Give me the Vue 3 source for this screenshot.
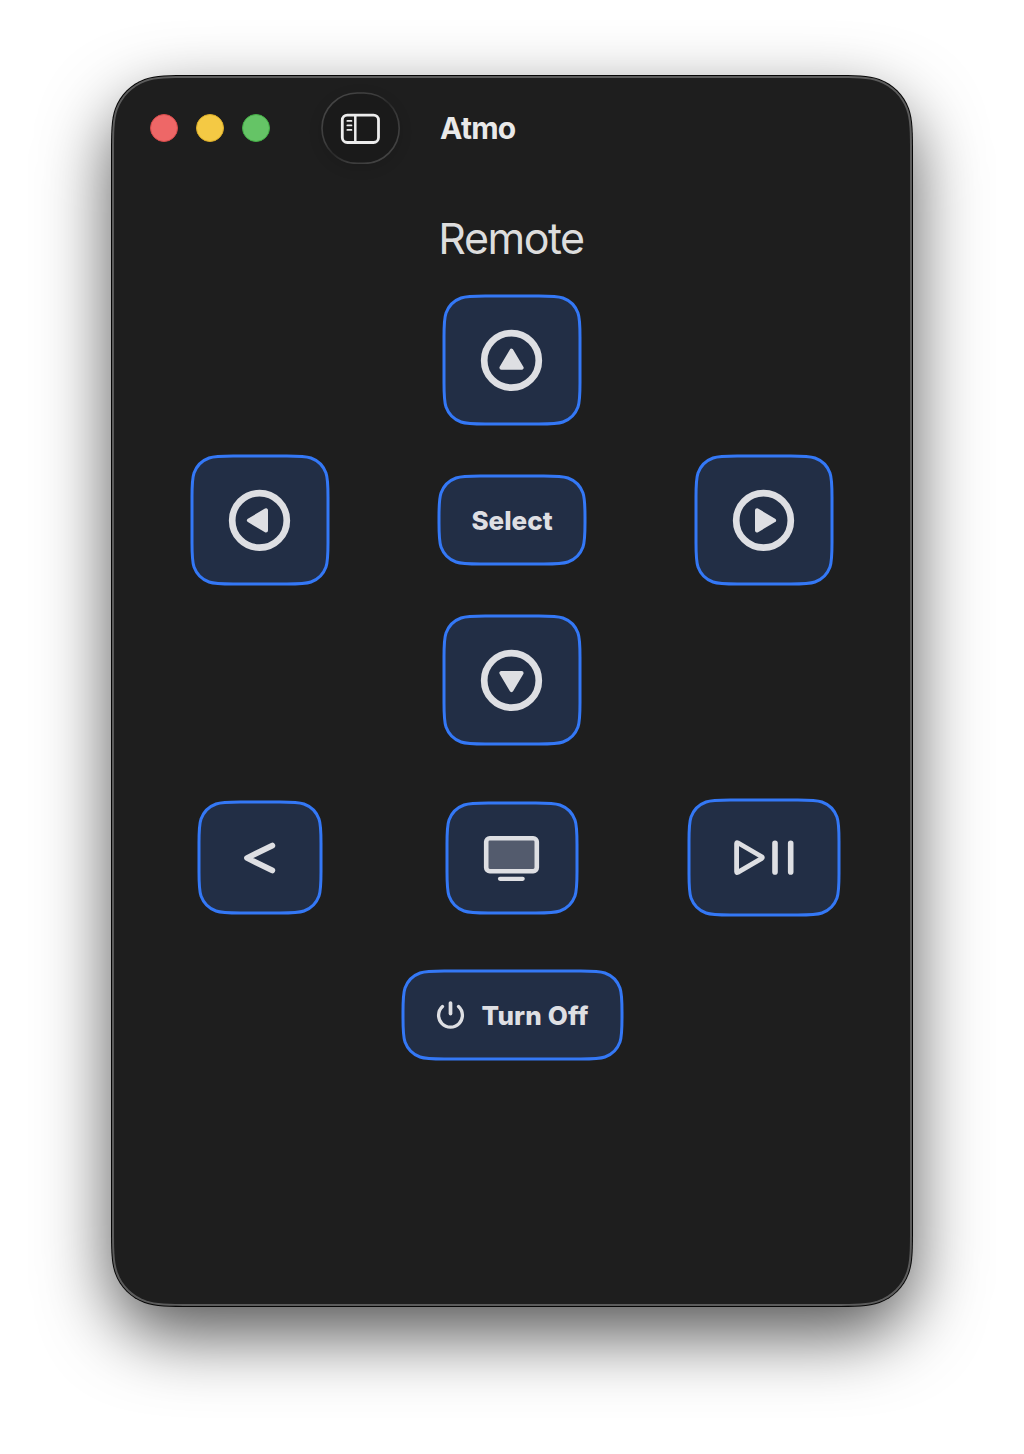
<script setup>
// Continuous-curvature rounded rectangle
function squircle(x, y, w, h, r) {
  const a = 1.528665 * r, b = 1.08849296 * r, c = 0.84 * r
  const d = 0.63149379 * r, e = 0.07491139 * r, f = 0.37282383 * r, g = 0.16905956 * r
  const R = x + w, B = y + h
  return `M${x + a} ${y}H${R - a}` +
    `C${R - b} ${y} ${R - c} ${y} ${R - d} ${y + e}` +
    `C${R - f} ${y + g} ${R - g} ${y + f} ${R - e} ${y + d}` +
    `C${R} ${y + c} ${R} ${y + b} ${R} ${y + a}V${B - a}` +
    `C${R} ${B - b} ${R} ${B - c} ${R - e} ${B - d}` +
    `C${R - g} ${B - f} ${R - f} ${B - g} ${R - d} ${B - e}` +
    `C${R - c} ${B} ${R - b} ${B} ${R - a} ${B}H${x + a}` +
    `C${x + b} ${B} ${x + c} ${B} ${x + d} ${B - e}` +
    `C${x + f} ${B - g} ${x + g} ${B - f} ${x + e} ${B - d}` +
    `C${x} ${B - c} ${x} ${B - b} ${x} ${B - a}V${y + a}` +
    `C${x} ${y + b} ${x} ${y + c} ${x + e} ${y + d}` +
    `C${x + g} ${y + f} ${x + f} ${y + g} ${x + d} ${y + e}` +
    `C${x + c} ${y} ${x + b} ${y} ${x + a} ${y}Z`
}

const rows = [
  { id: 'r1', keys: [{ id: 'up', w: 136, h: 128, turn: 0, nudge: 0 }] },
  {
    id: 'r2',
    keys: [
      { id: 'left', w: 136, h: 128, turn: -90, nudge: -0.9 },
      { id: 'select', w: 146, h: 88, label: 'Select' },
      { id: 'right', w: 136, h: 128, turn: 90, nudge: -0.9 },
    ],
  },
  { id: 'r3', keys: [{ id: 'down', w: 136, h: 128, turn: 180, nudge: 0 }] },
  {
    id: 'r4',
    keys: [
      { id: 'back', w: 122, h: 111 },
      { id: 'tv', w: 130, h: 110 },
      { id: 'play', w: 150, h: 115 },
    ],
  },
  { id: 'r5', keys: [{ id: 'power', w: 219, h: 88, label: 'Turn Off' }] },
]
</script>

<template>
  <div class="desktop">
    <main class="window">
      <svg class="frame" width="802" height="1232" viewBox="-1 -1 802 1232">
        <path :d="squircle(-1, -1, 802, 1232, 53)" fill="#050505" />
        <path :d="squircle(0, 0, 800, 1230, 52)" fill="#5c5c5c" />
        <path :d="squircle(2, 2, 796, 1226, 50)" fill="#1e1e1e" />
      </svg>

      <header class="titlebar">
        <div class="lights">
          <span class="light red"></span>
          <span class="light yellow"></span>
          <span class="light green"></span>
        </div>
        <button class="sidebar-toggle" aria-label="Toggle sidebar">
          <svg width="79" height="72" viewBox="0 0 79 72" fill="none">
            <defs>
              <linearGradient id="rim" x1="0" y1="0" x2="1" y2="1">
                <stop offset="0" stop-color="#484848" />
                <stop offset=".38" stop-color="#3c3c3c" />
                <stop offset=".5" stop-color="#292929" />
                <stop offset=".65" stop-color="#3a3a3a" />
                <stop offset="1" stop-color="#484848" />
              </linearGradient>
            </defs>
            <rect x="1" y="1" width="77.2" height="70.4" rx="35.2" fill="#1a1a1a" stroke="url(#rim)" stroke-width="1.6" />
            <g stroke="#ececec">
              <rect x="21.3" y="23.1" width="36.2" height="27.4" rx="5" stroke-width="2.8" />
              <path d="M34.3 23v27.5" stroke-width="2.5" />
              <path d="M26.4 28.9h4M26.4 33.4h4M26.4 37.9h4" stroke-width="1.9" stroke-linecap="round" />
            </g>
          </svg>
        </button>
        <span class="app-name">Atmo</span>
      </header>

      <h1 class="heading">Remote</h1>

      <section class="remote">
        <div v-for="row in rows" :key="row.id" class="row" :class="row.id">
          <div v-for="key in row.keys" :key="key.id" class="cell">
            <button class="key" :class="key.id" :aria-label="key.id" :style="{ width: key.w + 'px', height: key.h + 'px' }">
              <svg class="plate" :width="key.w + 4" :height="key.h + 4" :viewBox="`-2 -2 ${key.w + 4} ${key.h + 4}`">
                <path :d="squircle(0, 0, key.w, key.h, 27)" />
              </svg>

              <svg v-if="key.turn !== undefined" class="glyph" width="62" height="62" viewBox="-30.5 -31.4 62 62">
                <circle r="27.3" fill="none" stroke="#dedfe3" stroke-width="6.7" />
                <path :transform="`rotate(${key.turn}) translate(0 ${key.nudge})`" d="M0 -9.7L10.1 7.4H-10.1Z" fill="#dedfe3" stroke="#dedfe3" stroke-width="4" stroke-linejoin="round" />
              </svg>
              <svg v-else-if="key.id === 'back'" class="glyph" width="32" height="32" viewBox="0 0 32 32">
                <path d="M28.3 3.6L3 16L28.3 28.4" fill="none" stroke="#dedfe3" stroke-width="5.8" stroke-linecap="round" stroke-linejoin="round" />
              </svg>
              <svg v-else-if="key.id === 'tv'" class="glyph" width="56" height="46" viewBox="0.5 -0.6 56 46">
                <rect x="2.7" y="2.6" width="50.6" height="33" rx="3.6" fill="#535b6d" stroke="#dedfe3" stroke-width="4.6" />
                <path d="M16.5 43.2h22.7" stroke="#dedfe3" stroke-width="4.2" stroke-linecap="round" />
              </svg>
              <svg v-else-if="key.id === 'play'" class="glyph" width="62" height="38" viewBox="0 0.4 62 38">
                <g fill="none" stroke="#dedfe3" stroke-linecap="round" stroke-linejoin="round">
                  <path d="M3.6 4.8Q3.6 3.6 4.8 4.2L28.8 18.2Q29.9 19 28.8 19.8L4.8 33.8Q3.6 34.4 3.6 33.2Z" stroke-width="4.8" />
                  <path d="M42 4.6v28.8M57.7 4.6v28.8" stroke-width="5.6" />
                </g>
              </svg>
              <svg v-else-if="key.id === 'power'" class="glyph" width="28" height="28" viewBox="-0.5 0 28 28">
                <g fill="none" stroke="#dedfe3" stroke-linecap="round">
                  <path d="M6 5.5A11.9 11.9 0 1 0 22 5.5" stroke-width="3.3" />
                  <path d="M14 2v10.6" stroke-width="3.7" />
                </g>
              </svg>
              <span v-if="key.label" class="label">{{ key.label }}</span>
            </button>
          </div>
        </div>
      </section>
    </main>
  </div>
</template>

<style>
body {
  background: #fff;
}
</style>

<style scoped>
.desktop {
  box-sizing: border-box;
  width: 1024px;
  height: 1454px;
  padding: 76px 112px 0;
  overflow: hidden;
  background: #fff;
  font-family: Inter, "Liberation Sans", sans-serif;
}
.window {
  position: relative;
  width: 800px;
  height: 1230px;
  border-radius: 60px;
  box-shadow: 0 28px 70px rgba(0, 0, 0, 0.68);
}
.frame {
  position: absolute;
  left: -1px;
  top: -1px;
}
button {
  border: 0;
  padding: 0;
  background: none;
  font-family: inherit;
}
.titlebar {
  position: relative;
  display: flex;
  align-items: center;
  height: 104px;
  padding-left: 38px;
}
.lights {
  display: flex;
  gap: 18px;
}
.light {
  box-sizing: border-box;
  width: 28px;
  height: 28px;
  border-radius: 50%;
}
.red {
  background: #ee6767;
  border: 1px solid #d84a4a;
}
.yellow {
  background: #f4c944;
  border: 1px solid #dcae28;
}
.green {
  background: #65c466;
  border: 1px solid #43ae45;
}
.sidebar-toggle {
  width: 79px;
  height: 72px;
  margin-left: 51px;
  border-radius: 36px;
  box-shadow: 0 4px 14px rgba(0, 0, 0, 0.12);
}
.sidebar-toggle svg {
  display: block;
}
.app-name {
  margin-left: 40px;
  color: #e9e9e9;
  font-size: 30px;
  font-weight: 700;
  line-height: 36px;
  letter-spacing: -0.7px;
}
.heading {
  position: relative;
  margin: 30px 0 1px;
  height: 56px;
  color: #dddddd;
  font-size: 43px;
  font-weight: 430;
  line-height: 56px;
  letter-spacing: -1.5px;
  text-indent: -2px;
  text-align: center;
}
.remote {
  position: relative;
  display: flex;
  flex-direction: column;
  gap: 32px;
  padding: 29px 22px 0;
}
.row {
  display: flex;
  justify-content: center;
  align-items: center;
}
.cell {
  display: flex;
  justify-content: center;
  width: 252px;
}
.r4 {
  margin-top: 24px;
  height: 115px;
}
.r5 {
  margin-top: 24px;
}
.key {
  position: relative;
  display: flex;
  justify-content: center;
  align-items: center;
  color: #dedfe3;
}
.plate {
  position: absolute;
  left: -2px;
  top: -2px;
}
.plate path {
  fill: #222e45;
  stroke: #3478f6;
  stroke-width: 3;
}
.glyph,
.label {
  position: relative;
  flex: none;
}
.glyph {
  overflow: visible;
}
.label {
  padding-top: 2px;
  font-size: 26px;
  font-weight: 800;
  line-height: 32px;
  white-space: nowrap;
}
.power {
  gap: 18px;
}
.power .label {
  letter-spacing: 0.15px;
}
</style>
